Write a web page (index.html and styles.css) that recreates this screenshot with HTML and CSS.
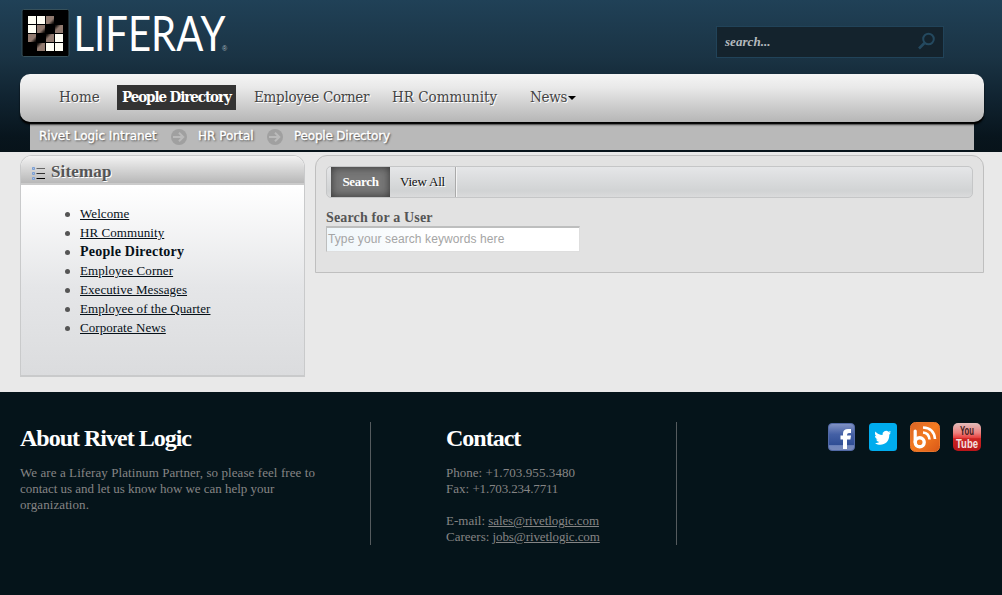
FILE: index.html
```html
<!DOCTYPE html>
<html lang="en">
<head>
<meta charset="utf-8">
<title>People Directory</title>
<link rel="stylesheet" href="styles.css">
</head>
<body>
<header class="banner">
  <div class="top">
    <svg class="logo" width="210" height="52" viewBox="0 0 210 52">
      <defs><linearGradient id="tile" x1="0" y1="0" x2="1" y2="1"><stop offset=".6" stop-color="#927b70"/><stop offset=".9" stop-color="#15100d"/></linearGradient>
      <linearGradient id="tile2" x1="1" y1="1" x2="0" y2="0"><stop offset=".6" stop-color="#927b70"/><stop offset=".9" stop-color="#15100d"/></linearGradient></defs>
      <rect x="0" y="1.5" width="47" height="47" rx="1.5" fill="#000" stroke="#36505a"/>
      <g fill="#fffef4"><path d="M6 8h8v8H6zM15 8h8v8h-8zM6 17h8v8H6zM33 26h8v8h-8zM24 35h8v8h-8zM33 35h8v8h-8z"/></g>
      <g fill="url(#tile)"><rect x="24" y="8" width="8" height="8"/><rect x="15" y="17" width="8" height="8"/><rect x="6" y="26" width="8" height="8"/></g>
      <g fill="url(#tile2)"><rect x="33" y="17" width="8" height="8"/><rect x="24" y="26" width="8" height="8"/><rect x="15" y="35" width="8" height="8"/></g>
      <text class="logo-word" x="51.500" y="43" textLength="152" lengthAdjust="spacingAndGlyphs">LIFERAY</text>
      <text class="logo-mark" x="200" y="43">®</text>
    </svg>
    <div class="search"><span>search...</span>
      <svg width="18" height="18" viewBox="0 0 18 18" fill="none" stroke="#24495f" stroke-width="2"><circle cx="10.5" cy="7" r="5.3"/><path d="M6.5 11 1 16.5" stroke-width="2.6"/></svg>
    </div>
  </div>
  <nav class="nav">
    <a class="home">Home</a><a class="current">People Directory</a><a class="corner">Employee Corner</a><a class="hr">HR Community</a><a class="news">News</a><i class="caret"></i>
  </nav>
  <div class="crumbs">
    <span class="crumb-a">Rivet Logic Intranet</span>
    <svg class="arrow" width="16" height="16" viewBox="0 0 16 16"><circle cx="8" cy="8" r="8" fill="#a0a0a0"/><path d="M2 8h10M8 3.7 12.3 8 8 12.3" fill="none" stroke="#bababa" stroke-width="2"/></svg>
    <span class="crumb-b">HR Portal</span>
    <svg class="arrow" width="16" height="16" viewBox="0 0 16 16"><circle cx="8" cy="8" r="8" fill="#a0a0a0"/><path d="M2 8h10M8 3.7 12.3 8 8 12.3" fill="none" stroke="#bababa" stroke-width="2"/></svg>
    <span class="crumb-c">People Directory</span>
  </div>
</header>
<main class="content">
  <section class="sitemap">
    <h2 class="sitemap-head">
      <svg width="13" height="13" viewBox="0 0 13 13"><g fill="#a9c2e6" stroke="#7c9fd3"><path d="M.5.5h2v2h-2zM.5 5.5h2v2h-2zM.5 10.5h2v2h-2z"/></g><path d="M4.500 1.500H13" stroke="#666"/><path d="M4.500 6.500H13" stroke="#333"/><path d="M4.500 11.500H13" stroke="#000"/></svg>
      <span>Sitemap</span>
    </h2>
    <ul class="links">
      <li><a>Welcome</a></li>
      <li><a>HR Community</a></li>
      <li><b>People Directory</b></li>
      <li><a>Employee Corner</a></li>
      <li><a>Executive Messages</a></li>
      <li><a>Employee of the Quarter</a></li>
      <li><a>Corporate News</a></li>
    </ul>
  </section>
  <section class="directory">
    <div class="tabs"><span class="tab tab-on">Search</span><span class="tab">View All</span></div>
    <label class="label">Search for a User</label>
    <div class="field">Type your search keywords here</div>
  </section>
</main>
<footer class="footer">
  <section class="about">
    <h3 class="title">About Rivet Logic</h3>
    <p class="copy">We are a Liferay Platinum Partner, so please feel free to<br><span class="tight">contact us and let us know how we can help your</span><br>organization.</p>
  </section>
  <section class="contact">
    <h3 class="title">Contact</h3>
    <p>Phone: <span class="num">+1.703.955.3480</span><br>Fax: <span class="num-fax">+1.703.234.7711</span><br><br>E-mail: <u>sales@rivetlogic.com</u><br>Careers: <u>jobs@rivetlogic.com</u></p>
  </section>
  <div class="social">
    <svg width="28" height="28" viewBox="0 0 28 28"><defs><linearGradient id="fb" x2="0" y2="1"><stop stop-color="#8494c5"/><stop offset=".4" stop-color="#4460a5"/><stop offset=".78" stop-color="#304e95"/><stop offset=".82" stop-color="#7186bd"/><stop offset="1" stop-color="#7789b8"/></linearGradient></defs><rect x=".5" y=".5" width="26" height="27" rx="3.500" fill="url(#fb)" stroke="#5269a5"/><path d="M15 26V16.500h-2.500v-4H15V10.500q0-4.500 5-4.500h3v4h-2q-2 0-2 2v.5h4l-.6 4H19V26z" fill="#fff"/></svg>
    <svg width="28" height="28" viewBox="0 0 28 28"><rect width="28" height="28" rx="3.500" fill="#00acee"/><path d="M22 9.500 20 10c1-.5 1.500-1.200 1.700-2l-2.200.8A3.600 3.600 0 0 0 13.500 12C10.500 12 8 10.500 6.500 8.400c-1 1.800-.5 3.700 1 4.800L6 12.800c0 1.700 1 3 2.700 3.500l-1.500.1c.5 1.400 1.700 2.300 3.200 2.400C9 20 7.500 20.300 6 20.200c6.500 3.800 14.500.2 14.300-8.500z" fill="#fff"/></svg>
    <svg width="30" height="30" viewBox="0 0 30 30"><defs><linearGradient id="blog" x2="1" y2="1"><stop stop-color="#d96427"/><stop offset=".5" stop-color="#f47b20"/><stop offset="1" stop-color="#d85718"/></linearGradient></defs><rect x=".5" y=".5" width="29" height="29" rx="5" fill="url(#blog)" stroke="#e7752c"/><path d="M5.200 9V20" stroke="#fff" stroke-width="3.200" stroke-linecap="round"/><circle cx="9.700" cy="20.300" r="4.500" fill="none" stroke="#fff" stroke-width="3.400"/><path d="M13 10.500q6 .5 6.500 7M13 5.500q11 .5 12 11.500" fill="none" stroke="#fff" stroke-width="2.600"/></svg>
    <svg class="tube-icon" width="28" height="28" viewBox="0 0 28 28"><defs><linearGradient id="yt" x2="0" y2="1"><stop stop-color="#e2bdbb"/><stop offset=".35" stop-color="#ed817e"/><stop offset=".52" stop-color="#e74442"/><stop offset=".56" stop-color="#cc2523"/><stop offset="1" stop-color="#b91519"/></linearGradient></defs><rect width="28" height="28" rx="5" fill="url(#yt)"/><g class="tube"><text x="7" y="12" fill="#411d1c" textLength="14" lengthAdjust="spacingAndGlyphs">You</text><text x="3" y="25" fill="#f4e1e0" textLength="22" lengthAdjust="spacingAndGlyphs">Tube</text></g></svg>
  </div>
</footer>
</body>
</html>
```
FILE: styles.css
```css
* { box-sizing: border-box; }
body { margin: 0; width: 1002px; height: 595px; overflow: hidden; background: #05141a; font: 13px/19px "Liberation Serif", serif; }
h2, h3, p, ul { margin: 0; padding: 0; }

.banner { height: 152px; padding: 0 18px 0 20px; background: linear-gradient(#204157, #1a3344 38%, #102330 65%, #08151d 90%, #07131a); }
.top { height: 74px; display: flex; justify-content: space-between; padding: 8px 40px 0 2px; }
.logo { display: block; overflow: visible; }
.logo-word { font: 49px Lato, sans-serif; fill: #fff; }
.logo-mark { font: 7px "Liberation Sans", sans-serif; fill: #a9b5bc; }
.search { width: 228px; height: 32px; margin-top: 18px; padding: 0 7px 0 8px; border: 1px solid #214359; background: #14232d; display: flex; justify-content: space-between; align-items: center; color: #b4babe; font: italic bold 13px "Liberation Serif", serif; letter-spacing: .05px; }
.search svg { margin-top: -3px; }

.nav { position: relative; z-index: 1; height: 48px; border-radius: 10px; padding: 11px 0 0 39px; display: flex; align-items: flex-start; background: linear-gradient(#f5f5f5, #e9e9e9 28%, #d2d2d2 60%, #b8b8b8 97%, #b2b2b2); box-shadow: 0 2px 1px #000, 0 3px 2px rgba(0,0,0,.6); color: #444; font: 15px/24px "DejaVu Serif Condensed", "DejaVu Serif", serif; font-stretch: condensed; letter-spacing: -.3px; text-shadow: 1px 1px 0 #fff; white-space: nowrap; }
.home { width: 58px; letter-spacing: 0; }
.current { width: 119px; height: 25px; padding-left: 5px; background: #333; color: #fff; font-weight: bold; text-shadow: none; letter-spacing: -1.08px; }
.corner { width: 138px; margin-left: 18px; }
.hr { width: 138px; letter-spacing: 0; }
.caret { margin: 11px 0 0 -1px; border: 4px solid transparent; border-top-color: #000; border-bottom: 0; }
.news { width: 39px; }

.crumbs { height: 28px; margin: 0 10px; padding: 0 0 1px 9px; display: flex; align-items: center; background: #b9b9b9; color: #fff; font: 12px "DejaVu Sans", sans-serif; -webkit-text-stroke: .35px #fff; text-shadow: 1px 1px 2px #333; white-space: nowrap; }
.arrow { margin: 2px 11px 0 14px; }
.crumb-a { width: 118px; }
.crumb-b { width: 55px; }
.crumb-c { letter-spacing: -.2px; }
.crumbs .arrow { flex: none; }

.content { height: 240px; padding: 3px 18px 0 20px; display: flex; gap: 10px; align-items: flex-start; background: #e9e9e9; }
.sitemap { width: 285px; height: 222px; border: 1px solid #c9cacb; border-bottom-width: 2px; border-radius: 12px 12px 0 0; overflow: hidden; background: linear-gradient(#fff 30px, #e5e6e8 60%, #dbdcde); }
.sitemap-head { height: 29px; padding: 4px 0 0 11px; display: flex; align-items: center; gap: 6px; border-bottom: 2px solid #cbcbcb; background: linear-gradient(#f2f2f2, #b8b8b8); color: #555; font: bold 17px/24px "Liberation Serif", serif; letter-spacing: .15px; text-shadow: 1px 1px 0 #fff; }
.sitemap-head svg { margin-top: 4px; }
.links { padding: 19px 0 0 44px; list-style: none; color: #061018; }
.links li { height: 19px; display: flex; align-items: center; }
.links li::before { content: ""; width: 5px; height: 5px; margin: 2px 10px 0 0; border-radius: 50%; background: #555; }
.links a { text-decoration: underline; letter-spacing: .07px; }
.links b { font-size: 14px; letter-spacing: .24px; }

.directory { width: 669px; height: 118px; padding: 10px; border: 1px solid #bfbfbf; border-radius: 12px 12px 0 0; background: #e2e2e2; }
.tabs { height: 32px; display: flex; padding-left: 4px; border: 1px solid #c5c6c7; border-radius: 5px; background: linear-gradient(#e5e6e8, #d1d3d4 80%, #dadbdc); }
.tab { width: 66px; height: 30px; line-height: 30px; text-align: center; border-right: 1px solid #aaa; box-shadow: 1px 0 #f4f4f4; color: #111; text-shadow: 1px 1px #fff; letter-spacing: -.2px; }
.tab-on { width: 59px; border: 0; color: #fff; font-weight: bold; text-shadow: none; background: #777; box-shadow: inset 0 0 9px #333; letter-spacing: -.3px; }
.label { display: block; height: 28px; padding-top: 10px; color: #555; font-weight: bold; font-size: 14px; letter-spacing: .15px; }
.field { width: 254px; height: 26px; padding-left: 1px; border: 1px solid #dedede; border-top: 2px solid #bdbebe; border-left-color: #bdbebe; background: linear-gradient(90deg, #eff6fa, #fff 40%); color: #a5a5a5; font: 12px/22px "Liberation Sans", sans-serif; letter-spacing: .1px; white-space: nowrap; }

.footer { height: 203px; padding: 30px 20px 0; display: flex; background: #05141a; color: #858585; line-height: 16px; white-space: nowrap; }
.about { width: 351px; height: 123px; border-right: 1px solid #555b5e; }
.copy { letter-spacing: .08px; }
.tight { letter-spacing: -.03px; }
.contact { width: 306px; height: 123px; padding-left: 75px; border-right: 1px solid #555b5e; }
.contact u { letter-spacing: -.1px; }
.num { letter-spacing: .08px; }
.num-fax { letter-spacing: -.15px; }
.title { height: 43px; color: #fff; font: bold 24px/32px "Liberation Serif", serif; letter-spacing: -1px; }
.social { display: flex; align-items: center; height: 30px; margin-left: 151px; gap: 13px; }
.tube { font: bold 13px "Liberation Sans", sans-serif; }
```
